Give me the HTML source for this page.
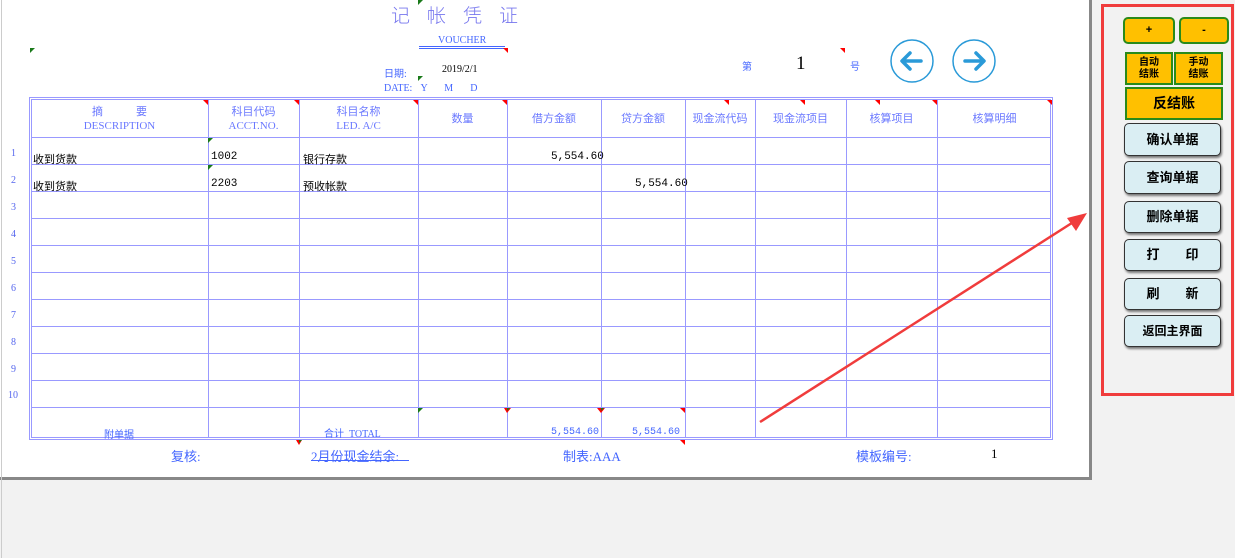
<!DOCTYPE html>
<html><head><meta charset="utf-8">
<style>
*{margin:0;padding:0;box-sizing:border-box}
body{width:1235px;height:558px;background:#f2f2f2;position:relative;overflow:hidden;font-family:"Liberation Serif","Noto Sans CJK SC",serif;}
.a{position:absolute;white-space:nowrap}
.b{color:#4466ff}
.h{color:#6a78ff;font-size:11px;text-align:center;line-height:14px}
.k{color:#000;font-size:11px;font-family:"Liberation Mono","Noto Sans CJK SC",monospace}
.btn{position:absolute;font-family:"Liberation Sans","Noto Sans CJK SC",sans-serif;font-weight:bold;text-align:center;color:#000}
.y{background:#ffc000;border:2px solid #2a8a1a}
.l{background:#daeef3;border:1px solid #333;border-radius:5px;box-shadow:1px 2px 2px #777;font-size:13px}
.num{color:#5566ee;font-size:10px;left:11px}
</style></head><body>
<div class="a" style="left:0;top:0;width:1092px;height:480px;background:#fff;border-right:3px solid #888;border-bottom:3px solid #888"></div>
<div class="a" style="left:1px;top:0;width:1px;height:558px;background:#ccc"></div>
<svg class="a" style="left:0;top:0" width="1235" height="558">
<g stroke="#9999ff" stroke-width="1" fill="none">
<rect x="29.5" y="97.5" width="1023" height="342"/>
<rect x="31.5" y="99.5" width="1019" height="338"/>
<line x1="31" y1="137.5" x2="1051" y2="137.5"/>
<line x1="31" y1="164.5" x2="1051" y2="164.5"/>
<line x1="31" y1="191.5" x2="1051" y2="191.5"/>
<line x1="31" y1="218.5" x2="1051" y2="218.5"/>
<line x1="31" y1="245.5" x2="1051" y2="245.5"/>
<line x1="31" y1="272.5" x2="1051" y2="272.5"/>
<line x1="31" y1="299.5" x2="1051" y2="299.5"/>
<line x1="31" y1="326.5" x2="1051" y2="326.5"/>
<line x1="31" y1="353.5" x2="1051" y2="353.5"/>
<line x1="31" y1="380.5" x2="1051" y2="380.5"/>
<line x1="31" y1="407.5" x2="1051" y2="407.5"/>
<line x1="208.5" y1="99" x2="208.5" y2="438"/>
<line x1="299.5" y1="99" x2="299.5" y2="438"/>
<line x1="418.5" y1="99" x2="418.5" y2="438"/>
<line x1="507.5" y1="99" x2="507.5" y2="438"/>
<line x1="601.5" y1="99" x2="601.5" y2="438"/>
<line x1="685.5" y1="99" x2="685.5" y2="438"/>
<line x1="755.5" y1="99" x2="755.5" y2="438"/>
<line x1="846.5" y1="99" x2="846.5" y2="438"/>
<line x1="937.5" y1="99" x2="937.5" y2="438"/>
</g>
<g stroke="#4466ff"><line x1="419" y1="46.5" x2="505" y2="46.5"/><line x1="419" y1="48.5" x2="505" y2="48.5"/><line x1="311" y1="460.5" x2="409" y2="460.5"/></g>
<g fill="red">
<polygon points="203,100 208,100 208,105"/><polygon points="294,100 299,100 299,105"/><polygon points="413,100 418,100 418,105"/><polygon points="502,100 507,100 507,105"/>
<polygon points="724,100 729,100 729,105"/><polygon points="800,100 805,100 805,105"/><polygon points="875,100 880,100 880,105"/><polygon points="932,100 937,100 937,105"/><polygon points="1047,100 1052,100 1052,105"/>
<polygon points="503,48 508,48 508,53"/><polygon points="840,48 845,48 845,53"/>
<polygon points="680,408 685,408 685,413"/><polygon points="680,440 685,440 685,445"/><polygon points="296,440 302,440 299,445"/>
<polygon points="504,408 511,408 507,413"/><polygon points="597,408 605,408 601,413"/>
</g>
<g fill="#1a7a1a">
<polygon points="30,48 35,48 30,53"/><polygon points="418,0 423,0 418,5"/><polygon points="418,76 423,76 418,81"/>
<polygon points="208,138 213,138 208,143"/><polygon points="208,165 213,165 208,170"/><polygon points="418,408 423,408 418,413"/>
<polygon points="507,408 510,408 507,411"/><polygon points="601,408 604,408 601,411"/><polygon points="299,440 302,440 299,443"/>
</g>
<circle cx="912" cy="61" r="21" fill="none" stroke="#2a9ad8" stroke-width="1.5"/>
<circle cx="974" cy="61" r="21" fill="none" stroke="#2a9ad8" stroke-width="1.5"/>
<g stroke="#2a9ad8" stroke-width="3.5" fill="none" stroke-linecap="round" stroke-linejoin="round">
<path d="M921 61H903M910 53L902 61L910 69"/><path d="M965 61H983M976 53L984 61L976 69"/>
</g>
<line x1="760" y1="422" x2="1075" y2="221" stroke="#f03c3c" stroke-width="2.5"/>
<polygon points="1087,213 1067,218 1076,231" fill="#f03c3c"/>
<rect x="1102.5" y="5.5" width="130" height="389" fill="none" stroke="#f03c3c" stroke-width="3"/>
</svg>
<div class="a" style="left:391px;top:3px;font-size:19px;letter-spacing:17px;color:#7777ee;font-family:'Noto Sans CJK SC',sans-serif;font-weight:300;line-height:24px">记帐凭证</div>
<div class="a b" style="left:438px;top:35px;font-size:10px">VOUCHER</div>
<div class="a b" style="left:384px;top:65px;font-size:10px">日期:</div>
<div class="a" style="left:442px;top:64px;font-size:10px">2019/2/1</div>
<div class="a b" style="left:384px;top:83px;font-size:10px;word-spacing:6px">DATE: Y &nbsp;M &nbsp;D</div>
<div class="a b" style="left:742px;top:58px;font-size:10px">第</div>
<div class="a" style="left:796px;top:53px;font-size:19px">1</div>
<div class="a b" style="left:850px;top:58px;font-size:10px">号</div>
<div class="a h" style="left:31px;top:105px;width:177px">摘　　　要<br>DESCRIPTION</div>
<div class="a h" style="left:208px;top:105px;width:91px">科目代码<br>ACCT.NO.</div>
<div class="a h" style="left:299px;top:105px;width:119px">科目名称<br>LED. A/C</div>
<div class="a h" style="left:418px;top:112px;width:89px">数量</div>
<div class="a h" style="left:507px;top:112px;width:94px">借方金额</div>
<div class="a h" style="left:601px;top:112px;width:84px">贷方金额</div>
<div class="a h" style="left:685px;top:112px;width:70px">现金流代码</div>
<div class="a h" style="left:755px;top:112px;width:91px">现金流项目</div>
<div class="a h" style="left:846px;top:112px;width:91px">核算项目</div>
<div class="a h" style="left:937px;top:112px;width:115px">核算明细</div>
<div class="a k" style="left:33px;top:151px">收到货款</div><div class="a k" style="left:211px;top:151px">1002</div><div class="a k" style="left:303px;top:151px">银行存款</div><div class="a k" style="left:551px;top:151px">5,554.60</div>
<div class="a k" style="left:33px;top:178px">收到货款</div><div class="a k" style="left:211px;top:178px">2203</div><div class="a k" style="left:303px;top:178px">预收帐款</div><div class="a k" style="left:635px;top:178px">5,554.60</div>
<div class="a num" style="top:148px">1</div><div class="a num" style="top:175px">2</div><div class="a num" style="top:202px">3</div><div class="a num" style="top:229px">4</div><div class="a num" style="top:256px">5</div><div class="a num" style="top:283px">6</div><div class="a num" style="top:310px">7</div><div class="a num" style="top:337px">8</div><div class="a num" style="top:364px">9</div><div class="a num" style="top:390px;left:8px">10</div>
<div class="a b" style="left:104px;top:426px;font-size:10px">附单据</div>
<div class="a b" style="left:324px;top:425px;font-size:10px">合计 &nbsp;TOTAL</div>
<div class="a b" style="left:551px;top:427px;font-size:10px;font-family:'Liberation Mono',monospace">5,554.60</div>
<div class="a b" style="left:632px;top:427px;font-size:10px;font-family:'Liberation Mono',monospace">5,554.60</div>
<div class="a b" style="left:171px;top:446px;font-size:13px">复核:</div>
<div class="a b" style="left:311px;top:446px;font-size:13px">2月份现金结余:</div>
<div class="a b" style="left:563px;top:446px;font-size:13px">制表:AAA</div>
<div class="a b" style="left:856px;top:446px;font-size:13px">模板编号:</div>
<div class="a" style="left:991px;top:446px;font-size:13px">1</div>
<div class="btn y" style="left:1123px;top:17px;width:52px;height:27px;border-radius:5px;font-size:11px;line-height:23px">+</div>
<div class="btn y" style="left:1179px;top:17px;width:50px;height:27px;border-radius:5px;font-size:11px;line-height:23px">-</div>
<div class="btn y" style="left:1125px;top:52px;width:48px;height:33px;font-size:10px;line-height:12px;padding-top:3px">自动<br>结账</div>
<div class="btn y" style="left:1174px;top:52px;width:49px;height:33px;font-size:10px;line-height:12px;padding-top:3px">手动<br>结账</div>
<div class="btn y" style="left:1125px;top:87px;width:98px;height:33px;font-size:14px;line-height:29px">反结账</div>
<div class="btn l" style="left:1124px;top:123px;width:97px;height:33px;line-height:31px">确认单据</div>
<div class="btn l" style="left:1124px;top:161px;width:97px;height:33px;line-height:31px">查询单据</div>
<div class="btn l" style="left:1124px;top:201px;width:97px;height:32px;line-height:30px">删除单据</div>
<div class="btn l" style="left:1124px;top:239px;width:97px;height:32px;line-height:30px">打　　印</div>
<div class="btn l" style="left:1124px;top:278px;width:97px;height:32px;line-height:30px">刷　　新</div>
<div class="btn l" style="left:1124px;top:315px;width:97px;height:32px;line-height:30px;font-size:12px">返回主界面</div>
</body></html>
